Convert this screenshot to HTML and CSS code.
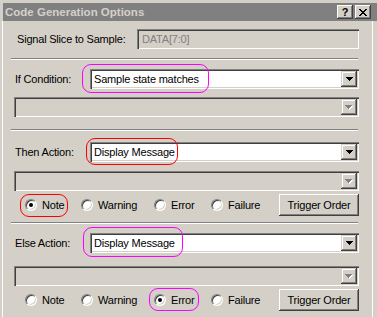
FILE: index.html
```html
<!DOCTYPE html>
<html>
<head>
    <title>Code Generation Options</title>
    <link rel="stylesheet" href="styles.css">
</head>
<body>
    <div class="window">
        <div class="titlebar">
            <span class="title">Code Generation Options</span>
            <div class="caption-buttons">
                <span class="caption-btn">?</span>
                <span class="caption-btn">
                    <svg width="8" height="7" viewBox="0 0 8 7" shape-rendering="crispEdges"><path fill="#000" d="M0 0h2v1H0z M6 0h2v1H6z M1 1h2v1H1z M5 1h2v1H5z M2 2h4v1H2z M3 3h2v1H3z M2 4h4v1H2z M1 5h2v1H1z M5 5h2v1H5z M0 6h2v1H0z M6 6h2v1H6z"/></svg>
                </span>
            </div>
        </div>

        <div class="panel">
            <div class="content">
                <div class="row row-signal">
                    <span class="label label-wide">Signal Slice to Sample:</span>
                    <div class="edit disabled">DATA[7:0]</div>
                </div>

                <div class="separator sep-first"></div>

                <!-- If -->
                <div class="row row-if">
                    <span class="label">If Condition:</span>
                    <div class="combo-wrap">
                        <div class="combo">
                            <span class="combo-text">Sample state matches</span>
                            <span class="drop-btn"><svg width="7" height="4" viewBox="0 0 7 4" shape-rendering="crispEdges"><path fill="#000" d="M0 0h7v1H0z M1 1h5v1H1z M2 2h3v1H2z M3 3h1v1H3z"/></svg></span>
                        </div>
                        <div class="mark magenta mark-if"></div>
                    </div>
                </div>
                <div class="combo combo-full disabled gap-if">
                    <span class="combo-text"></span>
                    <span class="drop-btn"><svg width="8" height="5" viewBox="0 0 8 5" shape-rendering="crispEdges"><path fill="#fff" d="M1 1h7v1H1z M2 2h5v1H2z M3 3h3v1H3z M4 4h1v1H4z"/><path fill="#808080" d="M0 0h7v1H0z M1 1h5v1H1z M2 2h3v1H2z M3 3h1v1H3z"/></svg></span>
                </div>

                <div class="separator sep-then"></div>

                <!-- Then -->
                <div class="row row-then">
                    <span class="label">Then Action:</span>
                    <div class="combo-wrap">
                        <div class="combo">
                            <span class="combo-text">Display Message</span>
                            <span class="drop-btn"><svg width="7" height="4" viewBox="0 0 7 4" shape-rendering="crispEdges"><path fill="#000" d="M0 0h7v1H0z M1 1h5v1H1z M2 2h3v1H2z M3 3h1v1H3z"/></svg></span>
                        </div>
                        <div class="mark red mark-then"></div>
                    </div>
                </div>
                <div class="combo combo-full disabled gap-then">
                    <span class="combo-text"></span>
                    <span class="drop-btn"><svg width="8" height="5" viewBox="0 0 8 5" shape-rendering="crispEdges"><path fill="#fff" d="M1 1h7v1H1z M2 2h5v1H2z M3 3h3v1H3z M4 4h1v1H4z"/><path fill="#808080" d="M0 0h7v1H0z M1 1h5v1H1z M2 2h3v1H2z M3 3h1v1H3z"/></svg></span>
                </div>
                <div class="radio-row">
                    <label class="radio-item item-note"><span class="radio checked"></span>Note</label>
                    <label class="radio-item item-warning"><span class="radio"></span>Warning</label>
                    <label class="radio-item item-error"><span class="radio"></span>Error</label>
                    <label class="radio-item"><span class="radio"></span>Failure</label>
                    <button class="button">Trigger Order</button>
                    <div class="mark red mark-note"></div>
                </div>

                <div class="separator sep-else"></div>

                <!-- Else -->
                <div class="row row-else">
                    <span class="label">Else Action:</span>
                    <div class="combo-wrap">
                        <div class="combo">
                            <span class="combo-text">Display Message</span>
                            <span class="drop-btn"><svg width="7" height="4" viewBox="0 0 7 4" shape-rendering="crispEdges"><path fill="#000" d="M0 0h7v1H0z M1 1h5v1H1z M2 2h3v1H2z M3 3h1v1H3z"/></svg></span>
                        </div>
                        <div class="mark magenta mark-else"></div>
                    </div>
                </div>
                <div class="combo combo-full disabled gap-else">
                    <span class="combo-text"></span>
                    <span class="drop-btn"><svg width="8" height="5" viewBox="0 0 8 5" shape-rendering="crispEdges"><path fill="#fff" d="M1 1h7v1H1z M2 2h5v1H2z M3 3h3v1H3z M4 4h1v1H4z"/><path fill="#808080" d="M0 0h7v1H0z M1 1h5v1H1z M2 2h3v1H2z M3 3h1v1H3z"/></svg></span>
                </div>
                <div class="radio-row">
                    <label class="radio-item item-note"><span class="radio"></span>Note</label>
                    <label class="radio-item item-warning"><span class="radio"></span>Warning</label>
                    <label class="radio-item item-error"><span class="radio checked"></span>Error</label>
                    <label class="radio-item"><span class="radio"></span>Failure</label>
                    <button class="button">Trigger Order</button>
                    <div class="mark magenta mark-error"></div>
                </div>
            </div>
        </div>
    </div>
</body>
</html>
```

FILE: styles.css
```css
:root {
    --face: #d4d0c8;
    --shadow: #808080;
    --dark: #404040;
    --light: #ffffff;
}

html,
body {
    margin: 0;
}

body {
    width: 377px;
    height: 317px;
    overflow: hidden;
    background: var(--face);
    font-family: 'Liberation Sans', Arial, sans-serif;
    font-size: 11px;
    letter-spacing: -0.2px;
    color: #000;
}

.window {
    height: 317px;
    box-sizing: border-box;
    padding: 3px 0 0 3px;
    display: flex;
    flex-direction: column;
}

/* title bar (inactive) */
.titlebar {
    height: 18px;
    flex-shrink: 0;
    background: var(--shadow);
    display: flex;
    align-items: center;
    justify-content: space-between;
    padding: 0 6px 0 2px;
}

.title {
    color: var(--face);
    font-weight: bold;
    font-size: 11.5px;
    letter-spacing: 0;
}

.caption-buttons {
    display: flex;
    gap: 2px;
}

.caption-btn {
    width: 16px;
    height: 14px;
    box-sizing: border-box;
    background: var(--face);
    box-shadow: inset -1px -1px var(--dark), inset 1px 1px var(--light), inset -2px -2px var(--shadow), inset 2px 2px var(--face);
    display: flex;
    align-items: center;
    justify-content: center;
    font-weight: bold;
    font-size: 11px;
    line-height: 1;
}

.panel {
    flex: 1;
    margin-left: -1px;
    width: 371px;
    box-sizing: border-box;
    border-left: 1px solid var(--light);
    border-right: 1px solid var(--light);
}

.content {
    width: 348px;
    margin-left: 8px;
    display: flex;
    flex-direction: column;
}

.row {
    display: flex;
    align-items: center;
}

.label {
    width: 75px;
    padding-left: 4px;
    flex-shrink: 0;
}

.label-wide {
    width: 120px;
    padding-left: 6px;
}

.row-signal {
    margin-top: 8px;
}

.row-if {
    margin-top: 9px;
}

.row-then {
    margin-top: 11px;
}

.row-else {
    margin-top: 9px;
}

.separator {
    width: 347px;
    border-top: 1px solid var(--shadow);
    border-bottom: 1px solid var(--light);
}

.sep-first {
    margin-top: 9px;
}

.sep-then {
    margin-top: 12px;
}

.sep-else {
    margin-top: 6px;
}

/* edit + combo boxes */
.edit {
    width: 222px;
    height: 20px;
    box-sizing: border-box;
    padding-left: 5px;
    display: flex;
    align-items: center;
    background: var(--light);
    box-shadow: inset 1px 1px var(--shadow), inset 2px 2px var(--dark), inset -1px -1px var(--light), inset -2px -2px var(--face);
}

.edit.disabled {
    background: var(--face);
    color: var(--shadow);
}

.combo-wrap {
    position: relative;
}

.combo {
    width: 269px;
    height: 20px;
    box-sizing: border-box;
    padding: 2px;
    display: flex;
    align-items: center;
    background: var(--light);
    box-shadow: inset 1px 1px var(--shadow), inset 2px 2px var(--dark), inset -1px -1px var(--light), inset -2px -2px var(--face);
}

.combo-text {
    flex: 1;
    padding-left: 2px;
    white-space: nowrap;
}

.drop-btn {
    width: 16px;
    height: 16px;
    box-sizing: border-box;
    background: var(--face);
    box-shadow: inset -1px -1px var(--dark), inset 1px 1px var(--face), inset -2px -2px var(--shadow), inset 2px 2px var(--light);
    display: flex;
    align-items: center;
    justify-content: center;
}

.drop-btn svg {
    display: block;
}

.combo.disabled {
    background: var(--face);
}

.combo-full {
    width: 345px;
    margin-left: 3px;
}

.gap-if {
    margin-top: 8px;
}

.gap-then {
    margin-top: 9px;
}

.gap-else {
    margin-top: 13px;
}

/* radios */
.radio-row {
    position: relative;
    display: flex;
    align-items: center;
    height: 22px;
    margin-top: 3px;
    padding-left: 14px;
}

.radio-item {
    display: flex;
    align-items: center;
    gap: 5px;
}

.item-note {
    width: 56px;
}

.item-warning {
    width: 73px;
}

.item-error {
    width: 57px;
}

.radio {
    position: relative;
    width: 12px;
    height: 12px;
    box-sizing: border-box;
    border-radius: 50%;
    background: var(--light);
    border: 1px solid;
    border-color: var(--shadow) var(--light) var(--light) var(--shadow);
    box-shadow: inset 1px 1px var(--dark), inset -1px -1px var(--face);
}

.radio.checked::after {
    content: '';
    position: absolute;
    left: 3px;
    top: 3px;
    width: 4px;
    height: 4px;
    border-radius: 50%;
    background: #000;
}

.button {
    margin-left: auto;
    width: 80px;
    height: 22px;
    padding: 0;
    border: none;
    background: var(--face);
    font-family: inherit;
    font-size: 11px;
    letter-spacing: inherit;
    color: #000;
    box-shadow: inset -1px -1px var(--dark), inset 1px 1px var(--light), inset -2px -2px var(--shadow), inset 2px 2px var(--face);
}

/* annotation outlines */
.mark {
    position: absolute;
    box-sizing: border-box;
    border: 1px solid;
    border-radius: 9px;
    pointer-events: none;
}

.magenta {
    border-color: #ff00ff;
}

.red {
    border-color: #ff0000;
}

.mark-if {
    left: -8px;
    top: -5px;
    width: 127px;
    height: 29px;
}

.mark-then {
    left: -4px;
    top: -4px;
    width: 92px;
    height: 27px;
}

.mark-else {
    left: -7px;
    top: -6px;
    width: 100px;
    height: 30px;
}

.mark-note {
    left: 9px;
    top: 0;
    width: 48px;
    height: 23px;
}

.mark-error {
    left: 138px;
    top: -1px;
    width: 50px;
    height: 23px;
}
```
